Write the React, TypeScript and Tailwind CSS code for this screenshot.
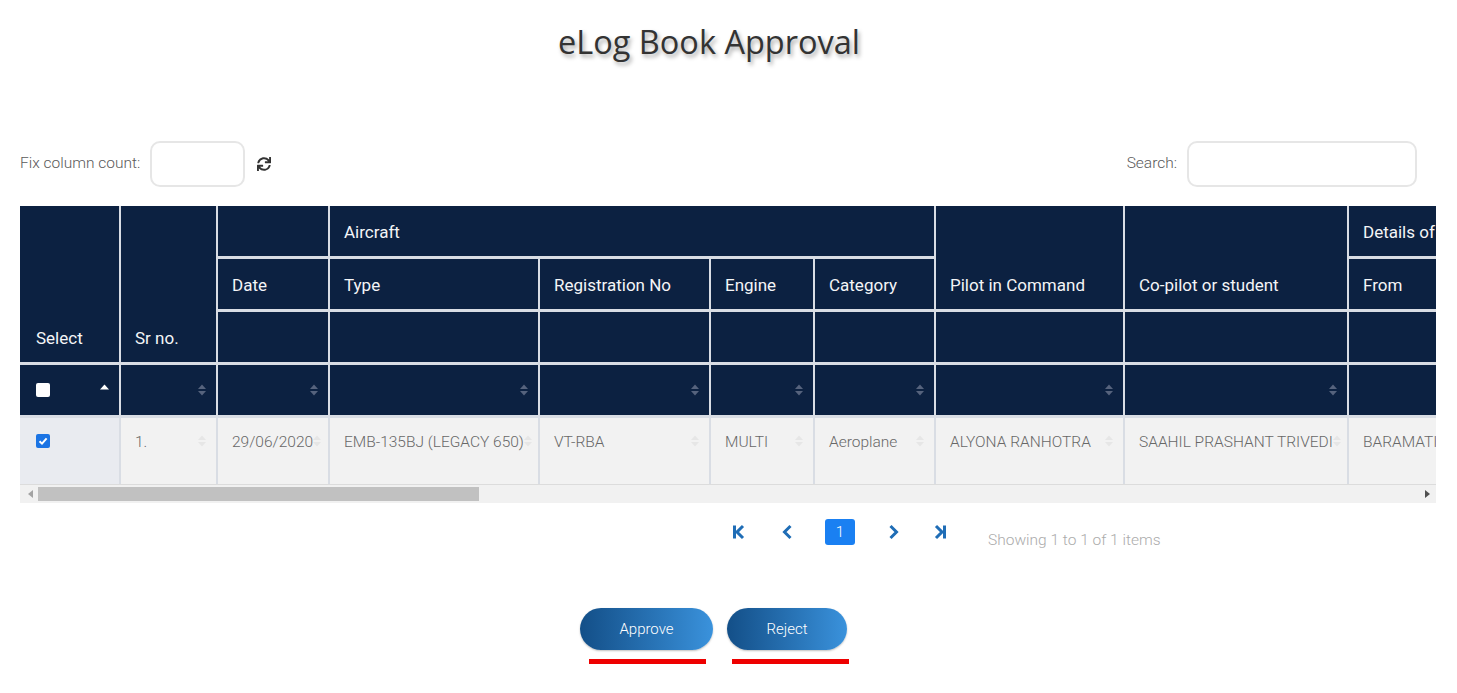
import React from 'react';
import { FaSync } from 'react-icons/fa';

const SortIcon = ({ faint = false }: { faint?: boolean }) => (
  <svg width="8" height="12" viewBox="0 0 8 12" className={faint ? 'text-[#e6e6e6]' : 'text-[#56637d]'}>
    <polygon points="0,5 4,0.5 8,5" fill="currentColor" />
    <polygon points="0,7 4,11.5 8,7" fill="currentColor" />
  </svg>
);

const Chevron = ({ dir, bar = false }: { dir: 'left' | 'right'; bar?: boolean }) => (
  <svg width="16" height="16" viewBox="0 0 16 16" className="text-[#1f6db6]">
    {dir === 'left' ? (
      <>
        {bar && <rect x="2" y="1.5" width="3" height="13" fill="currentColor" />}
        <polyline points={bar ? '12,2 6,8 12,14' : '10.5,2 4.5,8 10.5,14'} fill="none" stroke="currentColor" strokeWidth="3" />
      </>
    ) : (
      <>
        {bar && <rect x="11" y="1.5" width="3" height="13" fill="currentColor" />}
        <polyline points={bar ? '4,2 10,8 4,14' : '5.5,2 11.5,8 5.5,14'} fill="none" stroke="currentColor" strokeWidth="3" />
      </>
    )}
  </svg>
);

const head = 'bg-[#0c2141] text-[#f4f5f7] text-[17px] flex items-end pl-[14px] pb-[14px] leading-[20px] whitespace-nowrap overflow-hidden';
const blank = 'bg-[#0c2141]';
const sortCell = 'bg-[#0c2141] flex items-center justify-end pr-[10px]';
const dataCell = 'bg-[#f2f2f2] text-[#686868] text-[15.5px] font-light pl-[14px] pt-[14px] leading-[20px] flex justify-between pr-[10px] whitespace-nowrap overflow-hidden';

const rowData = ['29/06/2020', 'EMB-135BJ (LEGACY 650)', 'VT-RBA', 'MULTI', 'Aeroplane', 'ALYONA RANHOTRA', 'SAAHIL PRASHANT TRIVEDI', 'BARAMATI', 'BARAMATI'];

export default function App() {
  return (
    <div className="w-[1457px] h-[693px] bg-white overflow-hidden font-['Roboto',sans-serif]">
      <div className="w-[1418px] pt-[22px] text-center">
        <h1 className="text-[32.5px] leading-[40px] text-[#333] font-['Open_Sans',sans-serif] [text-shadow:2px_3px_4px_rgba(0,0,0,0.35)]">
          eLog Book Approval
        </h1>
      </div>

      <div className="mt-[79px] flex items-center justify-between pl-[20px] pr-[40px]">
        <div className="flex items-center">
          <span className="text-[15.5px] font-light text-[#5a5a5a]">Fix column count:</span>
          <input className="ml-[10px] w-[95px] h-[46px] border-2 border-[#e6e6e6] rounded-[10px] outline-none" />
          <FaSync className="ml-[12px] text-[#333] w-[14px] h-[14px]" />
        </div>
        <div className="flex items-center">
          <span className="text-[15.5px] font-light text-[#5a5a5a]">Search:</span>
          <input className="ml-[10px] w-[230px] h-[46px] border-2 border-[#e6e6e6] rounded-[10px] outline-none" />
        </div>
      </div>

      <div className="mt-[19px] ml-[20px] w-[1416px] overflow-hidden">
        <div className="grid w-max bg-[#d9dde4] grid-cols-[99px_95px_110px_208px_169px_102px_119px_187px_222px_160px_160px] grid-rows-[50px_50px_50px_50px_66px] gap-x-[2px] gap-y-[3px]">
          {/* row 1 */}
          <div className={`${head} row-span-3 pl-[16px]`}>Select</div>
          <div className={`${head} row-span-3`}>Sr no.</div>
          <div className={blank}></div>
          <div className={`${head} col-span-4`}>Aircraft</div>
          <div className={`${head} row-span-2`}>Pilot in Command</div>
          <div className={`${head} row-span-2`}>Co-pilot or student</div>
          <div className={`${head} col-span-2`}>Details of Flight</div>
          {/* row 2 */}
          <div className={head}>Date</div>
          <div className={head}>Type</div>
          <div className={head}>Registration No</div>
          <div className={head}>Engine</div>
          <div className={head}>Category</div>
          <div className={head}>From</div>
          <div className={head}>To</div>
          {/* row 3 */}
          {Array.from({ length: 9 }).map((_, i) => (
            <div key={`b${i}`} className={blank}></div>
          ))}
          {/* row 4 */}
          <div className="bg-[#0c2141] flex items-center justify-between pl-[16px] pr-[10px]">
            <span className="w-[14px] h-[14px] bg-white rounded-[2px]"></span>
            <svg width="9" height="6" viewBox="0 0 9 6" className="mb-[7px]">
              <polygon points="0,5.5 4.5,0.5 9,5.5" fill="#fff" />
            </svg>
          </div>
          {Array.from({ length: 10 }).map((_, i) => (
            <div key={`s${i}`} className={sortCell}>
              <SortIcon />
            </div>
          ))}
          {/* data row */}
          <div className="bg-[#e9ebf0] pl-[16px] pt-[16px]">
            <span className="flex items-center justify-center w-[14px] h-[14px] bg-[#1b74e4] rounded-[2px]">
              <svg width="10" height="10" viewBox="0 0 10 10">
                <polyline points="1.5,5.2 4,7.6 8.6,2.4" fill="none" stroke="#fff" strokeWidth="2" />
              </svg>
            </span>
          </div>
          <div className={dataCell}>
            <span>1.</span>
            <span className="pt-[3px]"><SortIcon faint /></span>
          </div>
          {rowData.map((d, i) => (
            <div key={`d${i}`} className={dataCell}>
              <span>{d}</span>
              <span className="pt-[3px]"><SortIcon faint /></span>
            </div>
          ))}
        </div>
        <div className="h-[19px] border-t border-[#dcdcdc] bg-[#f1f1f1] flex items-center">
          <svg width="5" height="8" viewBox="0 0 5 8" className="ml-[8px]">
            <polygon points="5,0 0,4 5,8" fill="#a3a3a3" />
          </svg>
          <div className="ml-[5px] w-[441px] h-[14px] bg-[#c1c1c1]"></div>
          <svg width="5" height="8" viewBox="0 0 5 8" className="ml-auto mr-[6px]">
            <polygon points="0,0 5,4 0,8" fill="#505050" />
          </svg>
        </div>
      </div>

      <div className="mt-[16px] flex items-center h-[26px] ml-[719px]">
        <div className="w-[40px] flex justify-center"><Chevron dir="left" bar /></div>
        <div className="ml-[9px] w-[40px] flex justify-center"><Chevron dir="left" /></div>
        <div className="ml-[17px] w-[30px] h-[26px] rounded-[3px] bg-[#1a80f2] text-white text-[15px] font-light flex items-center justify-center">1</div>
        <div className="ml-[18px] w-[40px] flex justify-center"><Chevron dir="right" /></div>
        <div className="ml-[7px] w-[40px] flex justify-center"><Chevron dir="right" bar /></div>
        <span className="ml-[28px] mt-[18px] text-[15.5px] font-light text-[#ababab]">Showing 1 to 1 of 1 items</span>
      </div>

      <div className="mt-[63px] ml-[580px] flex gap-[14px]">
        <div className="flex flex-col">
          <button className="w-[133px] h-[42px] rounded-full bg-gradient-to-r from-[#134f88] to-[#3a92dc] text-white text-[15px] font-light shadow-[0_1px_2px_rgba(0,0,0,0.25)]">
            Approve
          </button>
          <div className="mt-[9px] ml-[9px] w-[117px] h-[5px] bg-[#ee0000]"></div>
        </div>
        <div className="flex flex-col">
          <button className="w-[120px] h-[42px] rounded-full bg-gradient-to-r from-[#134f88] to-[#3a92dc] text-white text-[15px] font-light shadow-[0_1px_2px_rgba(0,0,0,0.25)]">
            Reject
          </button>
          <div className="mt-[9px] ml-[5px] w-[117px] h-[5px] bg-[#ee0000]"></div>
        </div>
      </div>
    </div>
  );
}
